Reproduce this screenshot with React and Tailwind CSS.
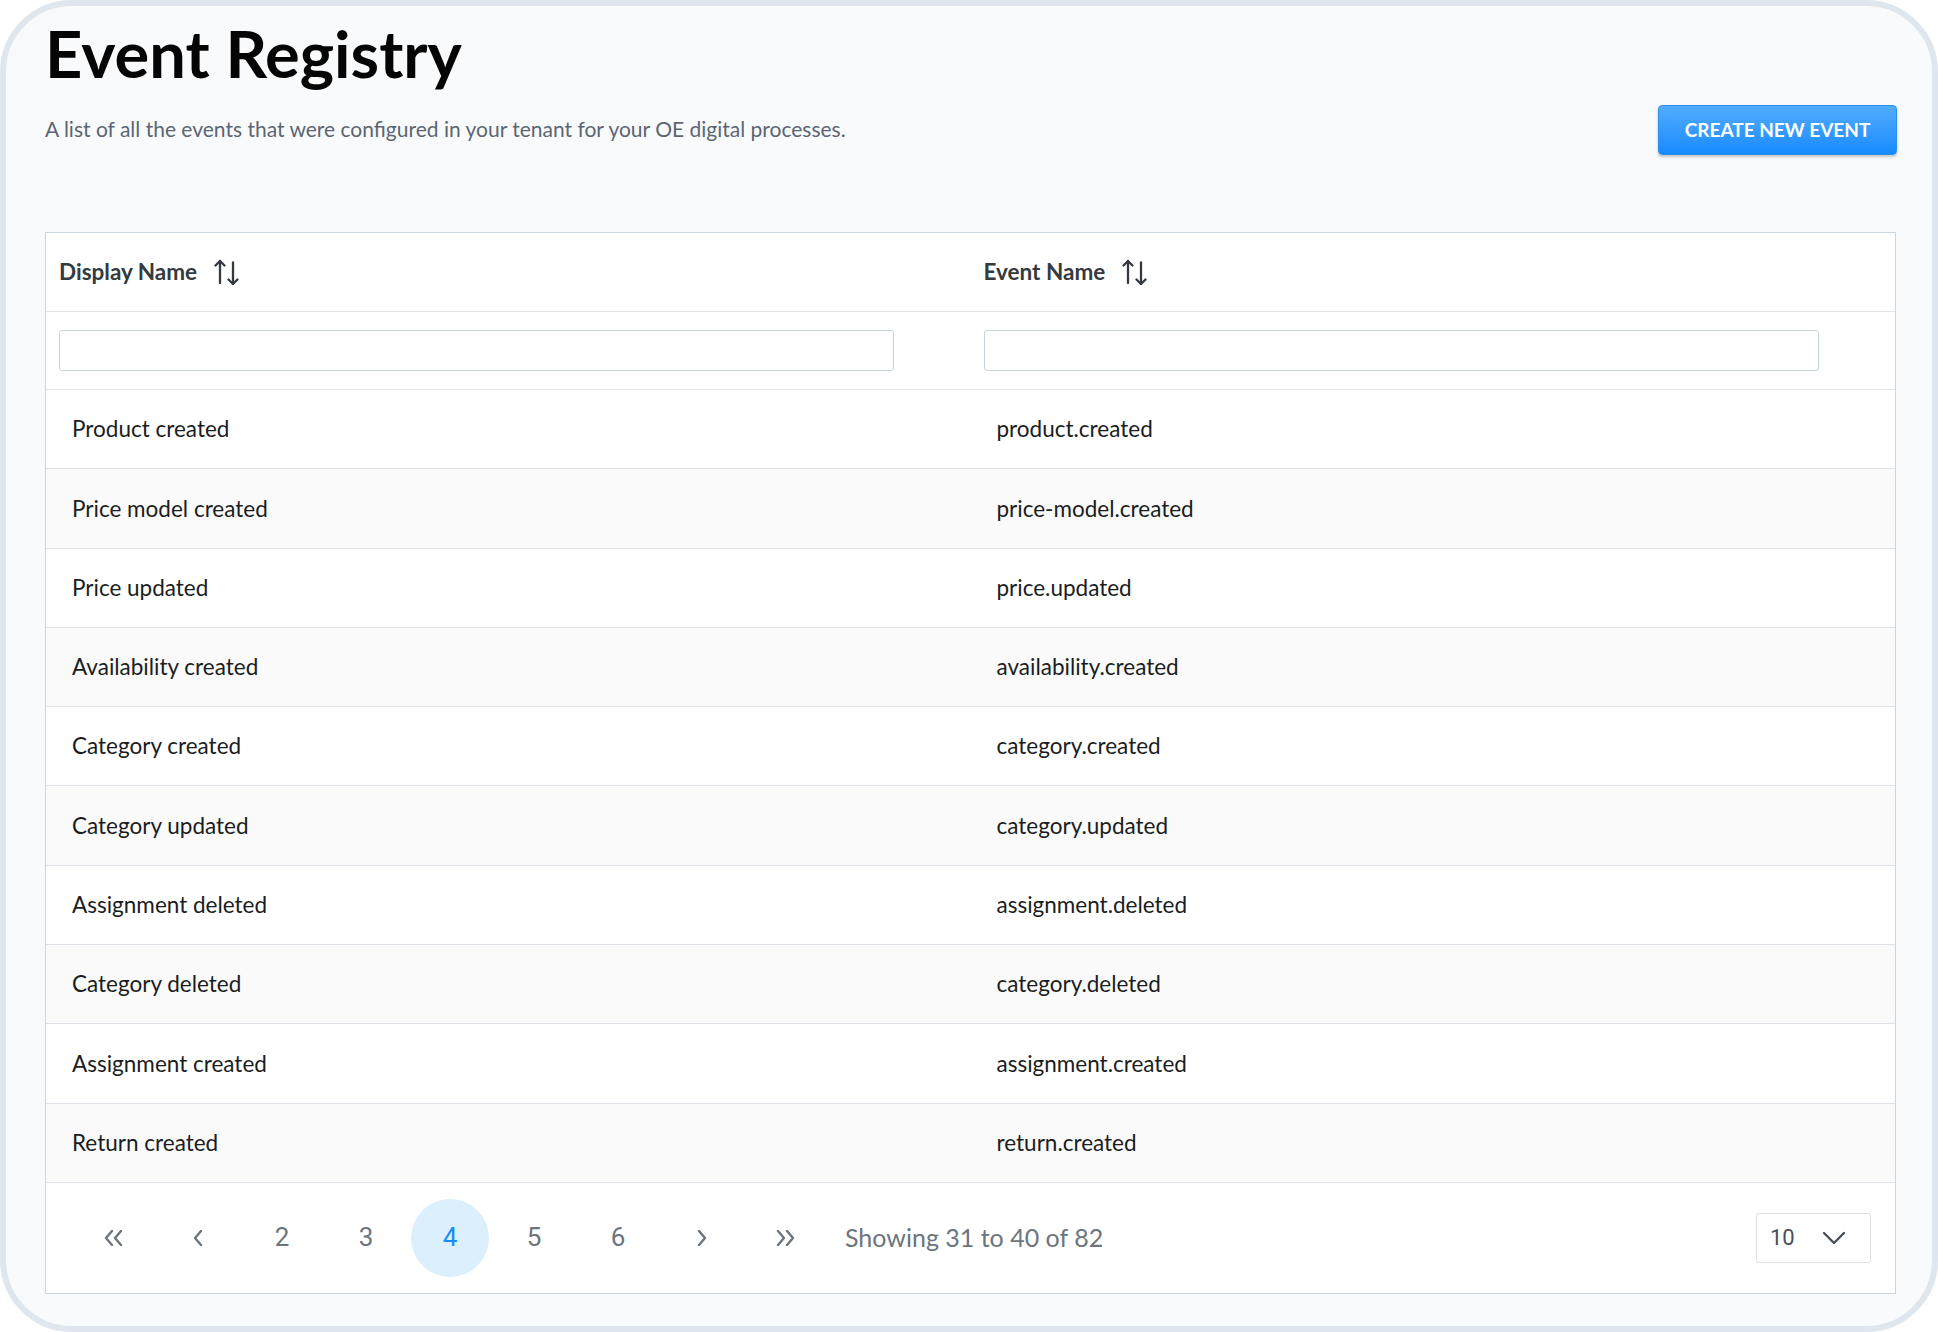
import React from "react";

const rows = [
  ["Product created", "product.created"],
  ["Price model created", "price-model.created"],
  ["Price updated", "price.updated"],
  ["Availability created", "availability.created"],
  ["Category created", "category.created"],
  ["Category updated", "category.updated"],
  ["Assignment deleted", "assignment.deleted"],
  ["Category deleted", "category.deleted"],
  ["Assignment created", "assignment.created"],
  ["Return created", "return.created"],
];

function SortIcon() {
  return (
    <svg width="25" height="26" viewBox="0 0 25 26" fill="none" stroke="#343a40" strokeWidth="2.3" strokeLinecap="round" strokeLinejoin="round">
      <line x1="6" y1="24" x2="6" y2="2" />
      <polyline points="1.5,6.5 6,2 10.5,6.5" />
      <line x1="19" y1="3.5" x2="19" y2="25" />
      <polyline points="14.5,20.5 19,25 23.5,20.5" />
    </svg>
  );
}

function Chev({ dir, double }) {
  const left = dir === "left";
  const one = (x) =>
    left ? `${x + 6},1 ${x},8 ${x + 6},15` : `${x},1 ${x + 6},8 ${x},15`;
  return (
    <svg width={double ? 20 : 12} height="16" viewBox={double ? "0 0 20 16" : "0 0 12 16"} fill="none" stroke="#6c757d" strokeWidth="2.4" strokeLinecap="round" strokeLinejoin="round">
      {double ? (
        <>
          <polyline points={one(2)} />
          <polyline points={one(11)} />
        </>
      ) : (
        <polyline points={one(3)} />
      )}
    </svg>
  );
}

export default function App() {
  const pageItem =
    "w-[78px] h-[78px] rounded-full flex items-center justify-center font-['Roboto',sans-serif] text-[26px] text-[#6c757d]";
  return (
    <div className="bg-white w-[1938px] h-[1332px]">
      <div className="w-full h-full box-border border-[6px] border-[#dfe6ee] rounded-[72px] bg-[#f9fafc] pl-[39px] pr-[35px] pt-[15px] font-['Lato',sans-serif]">
        <h1 className="text-[65px] leading-none font-bold text-[#050505]">Event Registry</h1>
        <div className="mt-[19px] flex items-center justify-between">
          <p className="text-[21px] leading-none text-[#5b6672] mb-[3px]">
            A list of all the events that were configured in your tenant for your OE digital processes.
          </p>
          <button className="w-[239px] h-[50px] rounded-[4px] bg-linear-to-b from-[#50acfd] to-[#148aff] text-white text-[19px] font-bold shadow-[0_2px_3px_rgba(0,0,0,0.22)] border border-[#2b8ff0]">
            CREATE NEW EVENT
          </button>
        </div>

        <div className="mt-[77px] mr-[1px] border border-[#c9d6e2] bg-white">
          <div className="grid grid-cols-2 h-[79px] border-b border-[#e1e5ea]">
            <div className="flex items-center pl-[13px] gap-[17px] text-[22.5px] font-bold text-[#343a40]">
              <span>Display Name</span>
              <SortIcon />
            </div>
            <div className="flex items-center pl-[13px] gap-[17px] text-[22.5px] font-bold text-[#343a40]">
              <span>Event Name</span>
              <SortIcon />
            </div>
          </div>
          <div className="grid grid-cols-2 h-[78px] border-b border-[#e1e5ea]">
            <div className="flex items-center pl-[13px]">
              <input className="w-[835px] h-[41px] border border-[#c6d4e0] rounded-[3px] bg-white outline-none" />
            </div>
            <div className="flex items-center pl-[13px]">
              <input className="w-[835px] h-[41px] border border-[#c6d4e0] rounded-[3px] bg-white outline-none" />
            </div>
          </div>
          {rows.map(([a, b], i) => (
            <div
              key={a}
              className={
                "grid grid-cols-2 h-[79.3px] border-b border-[#dde2e8] text-[22.5px] text-[#1a1d21] " +
                (i % 2 === 1 ? "bg-[#fafafa]" : "bg-white")
              }
            >
              <div className="flex items-center pl-[26px]">{a}</div>
              <div className="flex items-center pl-[26px]">{b}</div>
            </div>
          ))}
          <div className="flex items-center h-[110px] pl-[29px] pr-[24px]">
            <div className="flex items-center gap-[6px]">
              <div className={pageItem}><Chev dir="left" double /></div>
              <div className={pageItem}><Chev dir="left" /></div>
              <div className={pageItem}>2</div>
              <div className={pageItem}>3</div>
              <div className={pageItem + " bg-[#dbeffd] !text-[#1a8cff]"}>4</div>
              <div className={pageItem}>5</div>
              <div className={pageItem}>6</div>
              <div className={pageItem}><Chev dir="right" /></div>
              <div className={pageItem}><Chev dir="right" double /></div>
            </div>
            <div className="ml-[20px] text-[25px] text-[#6c757d]">Showing 31 to 40 of 82</div>
            <div className="ml-auto w-[115px] h-[50px] border border-[#dee2e6] rounded-[2px] flex items-center justify-between pl-[13px] pr-[24px] font-['Roboto',sans-serif] text-[22px] text-[#495057]">
              <span>10</span>
              <svg width="24" height="14" viewBox="0 0 24 14" fill="none" stroke="#495057" strokeWidth="2.4" strokeLinecap="round" strokeLinejoin="round">
                <polyline points="2,2 12,12 22,2" />
              </svg>
            </div>
          </div>
        </div>
      </div>
    </div>
  );
}
